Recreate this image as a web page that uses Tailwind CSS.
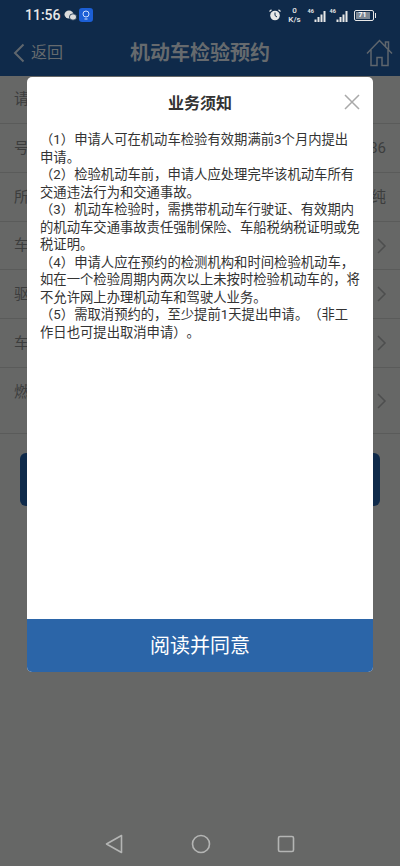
<!DOCTYPE html>
<html lang="en">

<head>
  <meta charset="UTF-8" />
  <meta name="viewport" content="width=device-width, initial-scale=1.0" />
  <title>机动车检验预约</title>
  <script src="https://cdn.jsdelivr.net/npm/@tailwindcss/browser@4"></script>
</head>

<body>
  <div class="relative w-[400px] h-[866px] overflow-hidden flex flex-col bg-[#666766] font-['Roboto','Noto_Sans_CJK_SC',sans-serif]">
    <!-- status bar -->
    <div class="h-[29px] pt-[1px] flex items-center justify-between pl-[25px] pr-[24px] bg-[#0f2a4a] text-[#e8e8e8]">
      <div class="flex items-center">
        <span class="text-[14px] font-medium">11:56</span>
        <svg class="ml-[3px]" width="13" height="11" viewBox="0 0 13 11"><ellipse cx="5" cy="4.500" rx="4.500" ry="4" fill="#ddd" /><ellipse cx="9" cy="7" rx="3.600" ry="3.200" fill="#ddd" stroke="#0f2a4a" stroke-width=".8" /></svg>
        <svg class="ml-[2px]" width="14" height="14" viewBox="0 0 14 14"><rect width="14" height="14" rx="3" fill="#1c5fd6" /><circle cx="7" cy="6" r="3" fill="none" stroke="#cfe0ff" stroke-width="1" /><path d="M5.500 11h3" stroke="#cfe0ff" stroke-width="1" /></svg>
      </div>
      <div class="flex items-center">
        <svg width="12" height="12" viewBox="0 0 12 12"><circle cx="6" cy="6.500" r="4.800" fill="#e8e8e8" /><path d="M6 3.500v3l2 1.500" stroke="#0f2a4a" stroke-width="1" fill="none" /><path d="M.5 2.500 2.500.8M11.500 2.500 9.500.8" stroke="#e8e8e8" stroke-width="1.200" /></svg>
        <div class="ml-[8px] w-[12px] flex flex-col items-center text-[8px] leading-[9px] font-medium"><span>0</span><span>K/s</span></div>
        <div class="ml-[7px] relative w-[20px] h-[13px]">
          <span class="absolute left-0 top-0 text-[5.500px] leading-[5px] font-bold">46</span>
          <svg class="absolute right-0 bottom-0" width="14" height="12" viewBox="0 0 14 12"><path d="M1.500 9.500V12M4.500 7v5M7.500 4.500V12M10.500 1v11" stroke="#e8e8e8" stroke-width="2" /></svg>
        </div>
        <div class="ml-[2px] relative w-[20px] h-[13px]">
          <span class="absolute left-0 top-0 text-[5.500px] leading-[5px] font-bold">46</span>
          <svg class="absolute right-0 bottom-0" width="14" height="12" viewBox="0 0 14 12"><path d="M1.500 9.500V12M4.500 7v5M7.500 4.500V12M10.500 1v11" stroke="#e8e8e8" stroke-width="2" /></svg>
        </div>
        <div class="ml-[4px] flex items-center">
          <div class="w-[20px] h-[11px] rounded-[2px] border border-[#e8e8e8] p-[1px]"><div class="h-full w-[14px] bg-[#7d8894] text-white text-[7px] leading-[7px] font-bold text-center">71</div></div>
          <div class="w-[1.500px] h-[5px] ml-[1px] bg-[#e8e8e8]"></div>
        </div>
      </div>
    </div>

    <!-- page header, under the mask -->
    <div class="relative h-[47px] flex items-center justify-between pl-[13px] pr-[7px] bg-[#0f2a4a] text-[#666a6e]">
      <div class="flex items-center">
        <svg width="12" height="20" viewBox="0 0 12 20" fill="none"><path d="M10.500 1.500 2 10l8.500 8.500" stroke="#5f666d" stroke-width="2" /></svg>
        <span class="ml-[6px] text-[16px]">返回</span>
      </div>
      <span class="absolute left-0 right-0 text-center text-[20px] font-bold">机动车检验预约</span>
      <svg width="27" height="28" viewBox="0 0 27 28" fill="none" stroke="#5f666d" stroke-width="1.500"><path d="M1 14.500 13.500 1.500 26 14.500M5 11v15.500h6v-8h5v8h6V11M19.500 7.500V3h3v8" /></svg>
    </div>

    <!-- form rows behind the mask -->
    <div class="text-[15px] text-[#3c3d3d] flex flex-col">
      <div class="h-[48px] flex items-center pl-[14px] border-b border-[#5a5b5a]">请</div>
      <div class="h-[49px] flex items-center justify-between px-[14px] border-b border-[#5a5b5a]"><span>号</span><span>36</span></div>
      <div class="h-[49px] flex items-center justify-between px-[14px] border-b border-[#5a5b5a]"><span>所</span><span>纯</span></div>
      <div class="h-[48px] flex items-center justify-between pl-[14px] pr-[13px] border-b border-[#5a5b5a]"><span>车</span><svg width="10" height="16" viewBox="0 0 10 16" fill="none"><path d="m1 1 7 7-7 7" stroke="#4d4e4e" stroke-width="1.500" /></svg></div>
      <div class="h-[49px] flex items-center justify-between pl-[14px] pr-[13px] border-b border-[#5a5b5a]"><span>驱</span><svg width="10" height="16" viewBox="0 0 10 16" fill="none"><path d="m1 1 7 7-7 7" stroke="#4d4e4e" stroke-width="1.500" /></svg></div>
      <div class="h-[49px] flex items-center justify-between pl-[14px] pr-[13px] border-b border-[#5a5b5a]"><span>车</span><svg width="10" height="16" viewBox="0 0 10 16" fill="none"><path d="m1 1 7 7-7 7" stroke="#4d4e4e" stroke-width="1.500" /></svg></div>
      <div class="h-[66px] flex items-center justify-between pl-[14px] pr-[13px] border-b border-[#5a5b5a]"><span class="mb-[16px]">燃</span><svg width="10" height="16" viewBox="0 0 10 16" fill="none"><path d="m1 1 7 7-7 7" stroke="#4d4e4e" stroke-width="1.500" /></svg></div>
    </div>
    <div class="mx-[20px] mt-[19px] h-[53px] rounded-[6px] bg-[#0f2a4a]"></div>

    <!-- nav bar -->
    <div class="mt-auto h-[44px] flex items-center justify-center">
      <svg width="18" height="20" viewBox="0 0 18 20" fill="none"><path d="M16.500 1.500v17L1.500 10z" stroke="#b4b5b4" stroke-width="1.600" stroke-linejoin="round" /></svg>
      <svg width="20" height="20" viewBox="0 0 20 20" fill="none" class="ml-[68px]"><circle cx="10" cy="10" r="8.500" stroke="#b4b5b4" stroke-width="1.600" /></svg>
      <svg width="18" height="18" viewBox="0 0 18 18" fill="none" class="ml-[66px]"><rect x="1.500" y="1.500" width="15" height="15" rx="1.500" stroke="#b4b5b4" stroke-width="1.600" /></svg>
    </div>

    <!-- notice dialog -->
    <div class="absolute left-[27px] top-[77px] w-[346px] h-[595px] rounded-[5px] overflow-hidden bg-white flex flex-col">
      <div class="relative h-[54px] flex items-center justify-center shrink-0">
        <span class="text-[16px] font-bold text-[#333] leading-none">业务须知</span>
        <svg class="absolute right-[13px] top-[17px]" width="16" height="16" viewBox="0 0 16 16" fill="none"><path d="m1 1 14 14M15 1 1 15" stroke="#a9a9a9" stroke-width="1.500" /></svg>
      </div>
      <div class="flex-1 px-[13px] text-[13.330px] leading-[17.550px] text-[#333] [text-spacing-trim:space-all]">
        <p>（1）申请人可在机动车检验有效期满前3个月内提出申请。</p>
        <p>（2）检验机动车前，申请人应处理完毕该机动车所有交通违法行为和交通事故。</p>
        <p>（3）机动车检验时，需携带机动车行驶证、有效期内的机动车交通事故责任强制保险、车船税纳税证明或免税证明。</p>
        <p>（4）申请人应在预约的检测机构和时间检验机动车，如在一个检验周期内两次以上未按时检验机动车的，将不允许网上办理机动车和驾驶人业务。</p>
        <p>（5）需取消预约的，至少提前1天提出申请。（非工作日也可提出取消申请）。</p>
      </div>
      <div class="h-[53px] shrink-0 flex items-center justify-center bg-[#2b65a8] text-white text-[20px]">阅读并同意</div>
    </div>
  </div>
</body>

</html>
